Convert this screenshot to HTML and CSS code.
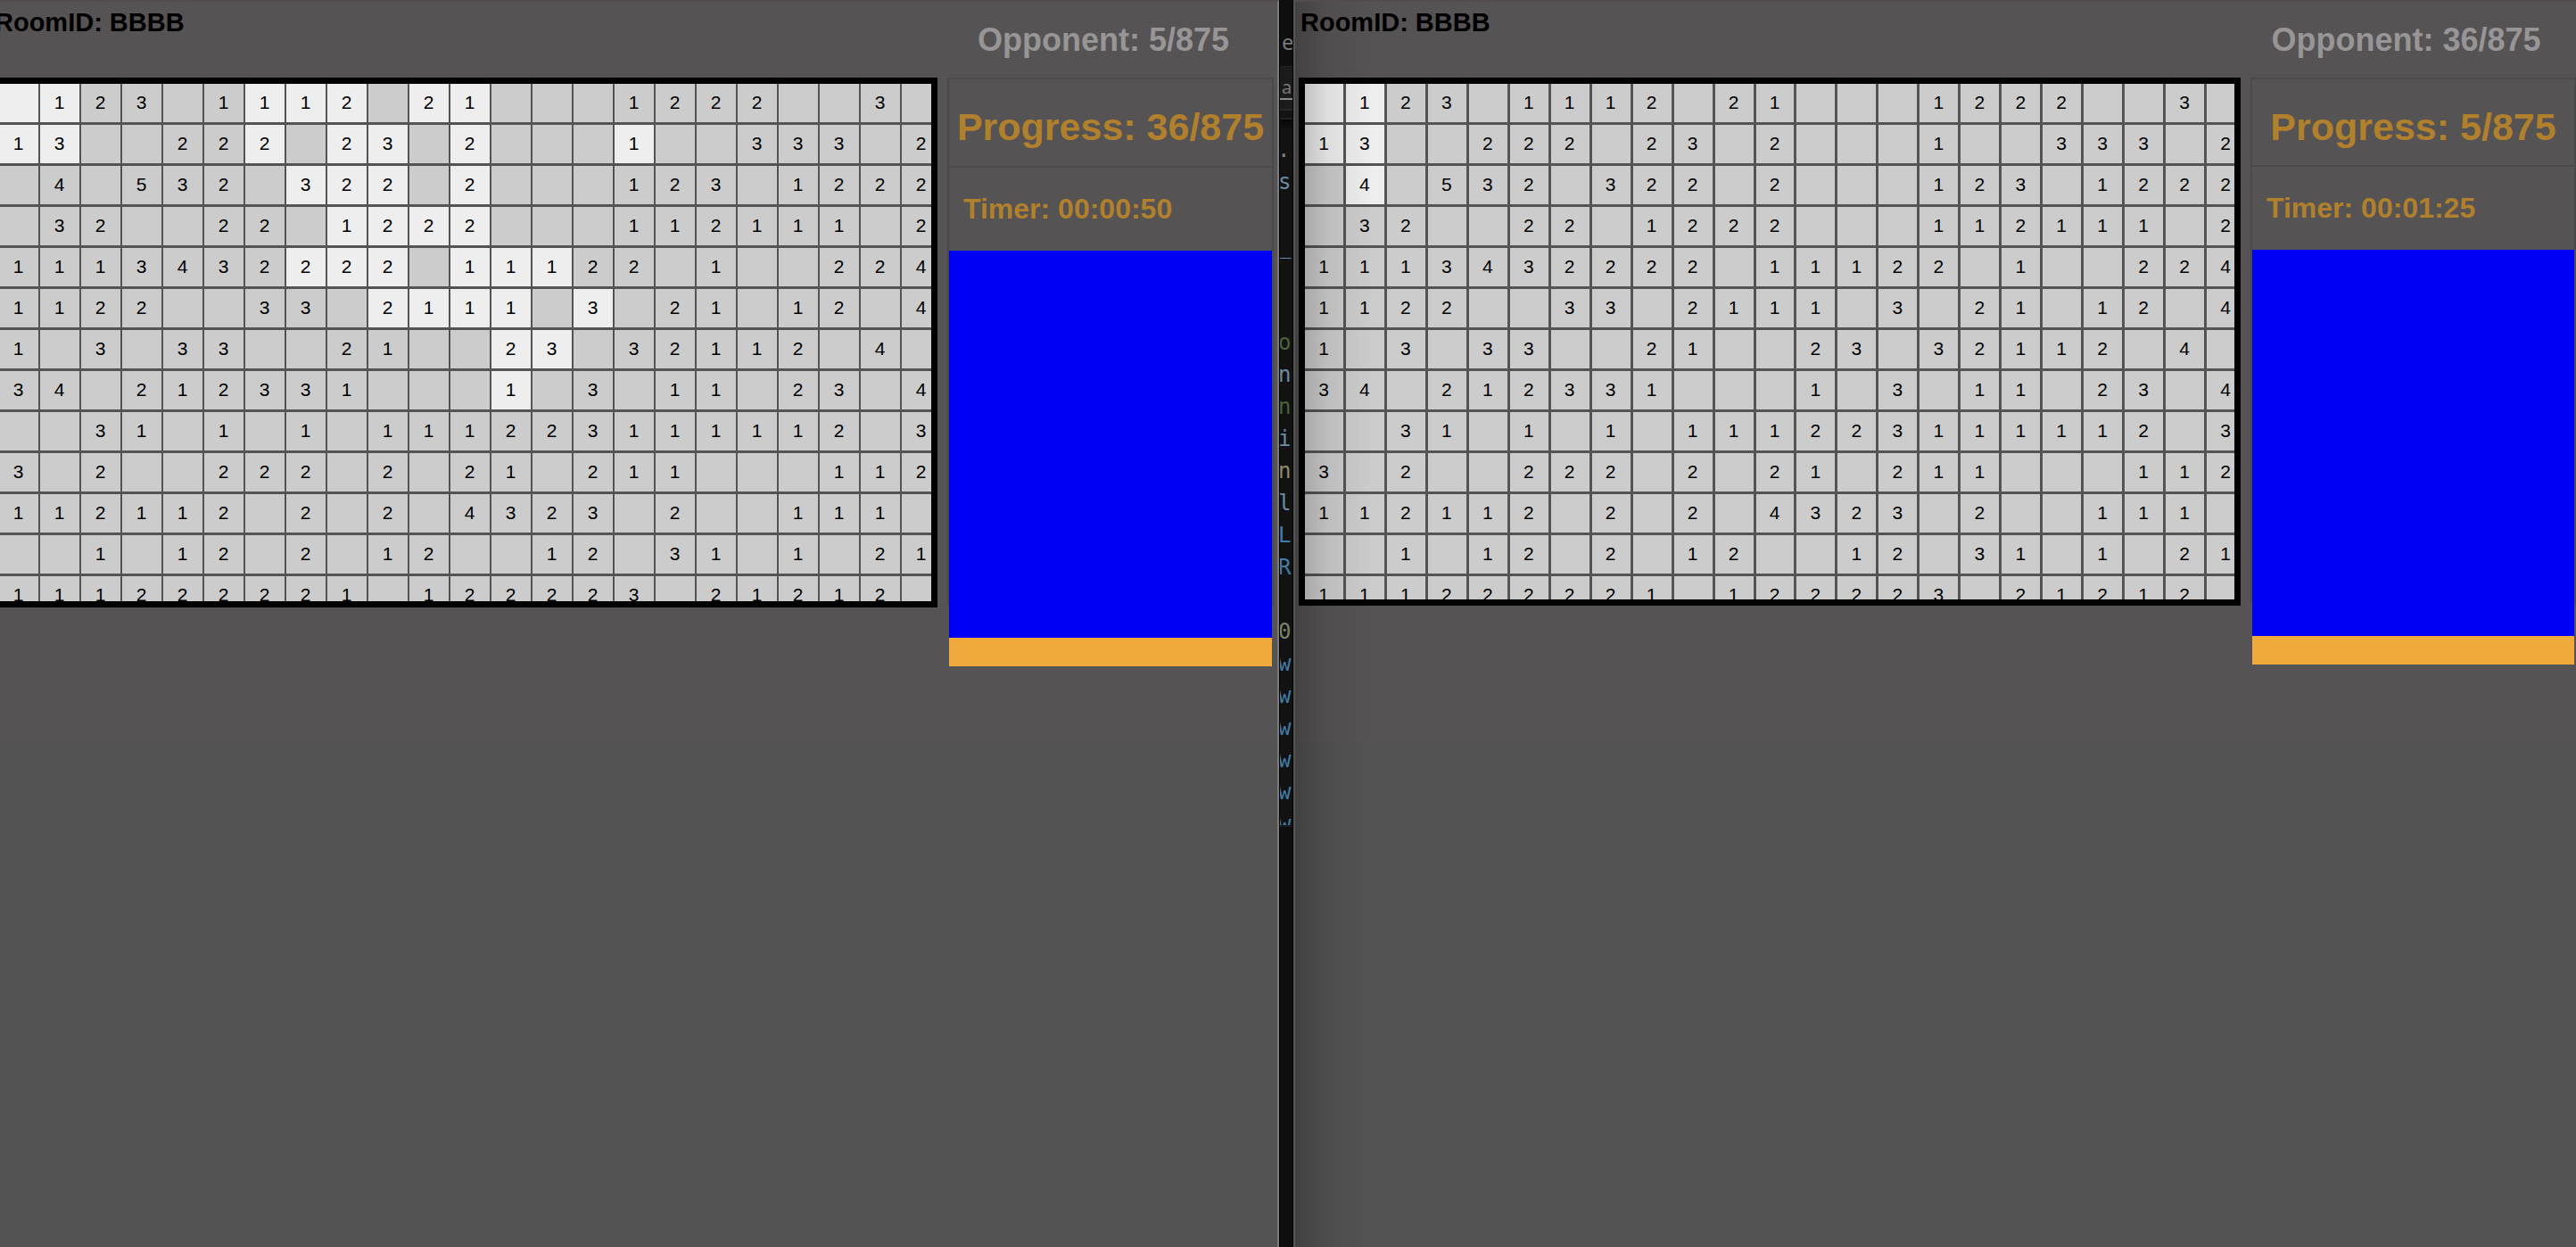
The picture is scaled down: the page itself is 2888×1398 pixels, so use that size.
FILE: index.html
```html
<!DOCTYPE html>
<html lang="en">
<head>
<meta charset="utf-8">
<title>Minesweeper</title>
<link rel="stylesheet" href="styles.css">
</head>
<body>
<div class="desktop">
  <main class="window window-left">
    <h1 class="room">RoomID: BBBB</h1>
    <p class="opponent">Opponent: 5/875</p>
    <section class="board"><div class="cells" data-open="0,1,6,7,8,10,11|0,1,6,8,9,11,15|7,8,9,11|8,9,10,11|7,8,9,11,12,13|9,10,11,12,14|12,13|12"></div></section>
    <aside class="side">
      <p class="progress">Progress: 36/875</p>
      <p class="timer">Timer: 00:00:50</p>
      <div class="chat"></div>
      <div class="chat-bar"></div>
    </aside>
  </main>

  <div class="editor">
    <div class="title">e</div>
    <div class="tab"><span>a</span></div>
    <div class="crumbs"></div>
    <pre class="code"><span class="c-text">.</span>
<span class="c-var">s</span>

<span class="c-var">_</span>


<span class="c-note">oo</span>
<span class="c-var">no</span>
<span class="c-note">no</span>
<span class="c-var">i</span>
<span class="c-func">n</span>
<span class="c-var">l</span>
<span class="c-key">Lo</span>
<span class="c-key">R</span>

<span class="c-num">0</span>
<span class="c-key">w</span>
<span class="c-key">w</span>
<span class="c-key">w</span>
<span class="c-key">w</span>
<span class="c-key">w</span>
<span class="c-key">w</span></pre>
  </div>

  <main class="window window-right">
    <h1 class="room">RoomID: BBBB</h1>
    <p class="opponent">Opponent: 36/875</p>
    <section class="board"><div class="cells" data-open="0,1|0,1|1"></div></section>
    <aside class="side">
      <p class="progress">Progress: 5/875</p>
      <p class="timer">Timer: 00:01:25</p>
      <div class="chat"></div>
      <div class="chat-bar"></div>
    </aside>
  </main>
</div>
<script src="board.js"></script>
</body>
</html>
```

FILE: styles.css
```css
* {
  box-sizing: border-box;
}

body {
  margin: 0;
  font-family: "Liberation Sans", Arial, sans-serif;
  background: #111;
}

h1,
p,
pre {
  margin: 0;
}

.desktop {
  display: grid;
  grid-template-columns: calc(50% - 10px) 16px minmax(0, 1fr);
  height: 100vh;
  overflow: hidden;
}

/* One game window */
.window {
  display: grid;
  grid-template-columns: minmax(0, 1fr) var(--side);
  grid-template-rows: 85px var(--board);
  column-gap: 11px;
  align-content: start;
  overflow: hidden;
  border-top: 2px solid #554a4c;
  background: linear-gradient(#565354 829px, #525352 829px);
}

.window-left {
  --side: 366px;
  --board: 594px;
  --grid: 1056px;
  --col-gap: 2px;
  --progress: 97px;
  --chat: 434px;
  padding-right: 4px;
  border-right: 2px solid #7a7a7a;
}

.window-left .room,
.window-left .board {
  margin-left: -8px;
}

.window-right {
  --side: 365px;
  --board: 592px;
  --grid: 1054px;
  --col-gap: 3px;
  --progress: 96px;
  --chat: 433px;
  position: relative;
  padding-left: 4px;
  border-left: 2px solid #555;
}

/* Shadow cast by the neighbouring window */
.window-right::after {
  content: "";
  position: absolute;
  inset: 0 auto 0 0;
  width: 90px;
  background: linear-gradient(90deg, rgba(0, 0, 0, 0.22), rgba(0, 0, 0, 0.07) 40%, transparent);
  pointer-events: none;
}

.room {
  padding: 6px 0 0 2px;
  font-size: 29px;
  line-height: 34px;
  color: #000;
}

.opponent {
  padding: 22px 16px 0 0;
  font-size: 36px;
  font-weight: bold;
  line-height: 42px;
  text-align: center;
  color: #989596;
  white-space: nowrap;
}

.board {
  overflow: hidden;
  border: 7px solid #000;
}

.cells {
  display: grid;
  grid-template-columns: repeat(23, 1fr);
  grid-auto-rows: 43px;
  gap: 3px var(--col-gap);
  width: var(--grid);
}

.cell {
  padding: 0 1px 1px 0;
  border: 0;
  border-radius: 0;
  background: #ccc;
  font: 21px/42px "Liberation Sans", Arial, sans-serif;
  color: #000;
}

.cell.open {
  background: #eee;
}

.side {
  height: calc(100% - 2px);
  border: 2px solid #4b4a4b;
  border-bottom: 0;
}

.progress,
.timer {
  font-weight: bold;
  color: #b0802d;
  white-space: nowrap;
}

.progress {
  height: calc(var(--progress) + 2px);
  padding-top: 10px;
  border-bottom: 2px solid #4b4a4b;
  font-size: 43px;
  line-height: 87px;
  text-align: center;
}

.timer {
  padding-left: 16px;
  font-size: 32px;
  line-height: 93px;
}

.chat {
  height: var(--chat);
  background: #0000f5;
}

.chat-bar {
  height: 32px;
  background: #f0a93b;
}

/* Sliver of the code editor between the windows */
.editor {
  overflow: hidden;
  border: solid #000;
  border-width: 0 1px;
  background: #0e0e0e;
}

.title {
  height: 75px;
  padding: 31px 0 0 2px;
  border-bottom: 1px solid #222;
  font: 24px/32px "Noto Sans", sans-serif;
  color: #777;
}

.tab {
  height: 49px;
  padding-top: 10px;
  border-bottom: 2px solid #282828;
  background: #1b1b1b;
  font: 20px/26px "Noto Sans", sans-serif;
  color: #777;
}

.tab span {
  display: block;
  height: 27px;
  padding-left: 2px;
  border-bottom: 2px solid #888;
}

.crumbs {
  height: 10px;
  border-bottom: 2px solid #222;
  background: #131313;
}

.code {
  height: 793px;
  padding-top: 16px;
  overflow: hidden;
  border-bottom: 2px solid #1b1b1b;
  background: linear-gradient(#060606, #121212 12px);
  font: 24px/36px "DejaVu Sans Mono", monospace;
  text-indent: -1px;
}

.code span {
  margin-left: -2px;
}

.c-text { color: #808080; }
.c-var { color: #6a8ba3; }
.c-note { color: #4a6338; }
.c-func { color: #8e8c68; }
.c-key { color: #3f7cab; }
.c-num { color: #76856a; }
```

FILE: board.js
```js
const rows = [
  ".123.1112.21...1222..3.",
  "13..222.23.2...1..333.2",
  ".4.532.322.2...123.1222",
  ".32..22.1222...112111.2",
  "1113432222.11122.1..224",
  "1122..33.2111.3.21.12.4",
  "1.3.33..21..23.32112.4.",
  "34.212331...1.3.11.23.4",
  "..31.1.1.111223111112.3",
  "3.2..222.2.21.211...112",
  "112112.2.2.4323.2..111.",
  "..1.12.2.12..12.31.1.21",
  "111222221.122223.21212."
];

document.querySelectorAll(".cells").forEach((cells) => {
  const open = cells.dataset.open.split("|").map((r) => r.split(",").map(Number));
  rows.forEach((row, y) => {
    [...row].forEach((mark, x) => {
      const cell = document.createElement("button");
      cell.type = "button";
      cell.className = "cell";
      if (open[y] && open[y].includes(x)) cell.classList.add("open");
      if (mark !== ".") cell.textContent = mark;
      cells.append(cell);
    });
  });
});
```
